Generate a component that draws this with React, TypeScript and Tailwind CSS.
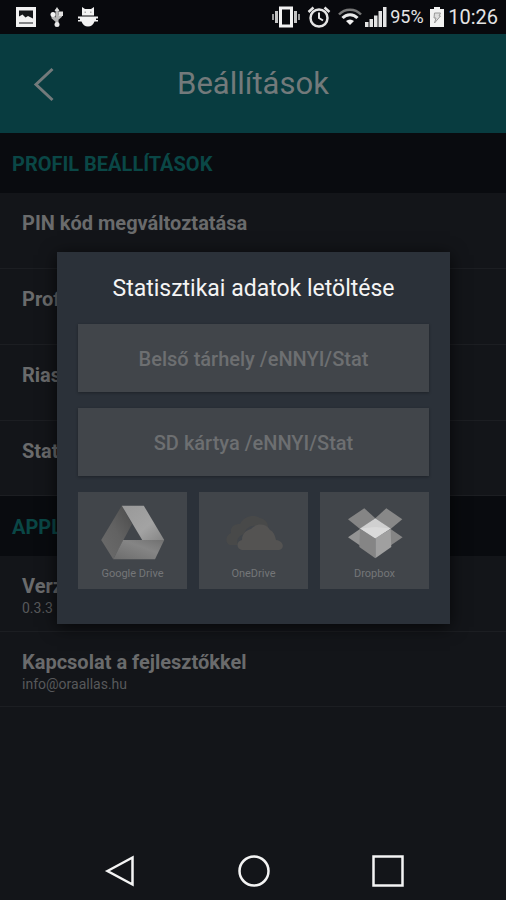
import type { ReactNode } from 'react';

interface SettingsItem {
    title: string;
    subtitle?: string;
}

const profileItems: SettingsItem[] = [
    { title: 'PIN kód megváltoztatása' },
    { title: 'Profil' },
    { title: 'Riaszt' },
    { title: 'Stat' },
];

const appItems: SettingsItem[] = [
    { title: 'Verzió', subtitle: '0.3.3' },
    { title: 'Kapcsolat a fejlesztőkkel', subtitle: 'info@oraallas.hu' },
];

function StatusBar() {
    return (
        <div className="flex h-[34px] items-center justify-between bg-[#08090d] pl-4 pr-2 text-[#e4e4e4]">
            <div className="flex items-center gap-3">
                <svg width="20" height="20" viewBox="0 0 20 20">
                    <path d="M0 0h20v20H0z" fill="#f2f2f2" />
                    <path d="M3 3.500h14v13H3z" fill="#15171a" />
                    <path d="M3 15.500V9.500l3.500-2 3 3 2.500-1.500 5 2.500v4z" fill="#f2f2f2" />
                </svg>
                <svg width="18" height="20" viewBox="0 0 18 20">
                    <path d="M9 2v15M9 14l-4-3.500V8M9 12l3.500-3V6" stroke="#b5b5b5" strokeWidth="3" fill="none" />
                    <path d="M9 0l2.500 4h-5z" fill="#d8d8d8" />
                    <circle cx="5" cy="7.500" r="2.500" fill="#f2f2f2" />
                    <path d="M10.500 4.500h4.500V9h-4.500z" fill="#e0e0e0" />
                    <circle cx="9" cy="17.500" r="2.500" fill="#e8e8e8" />
                </svg>
                <svg width="20" height="20" viewBox="0 0 20 20" fill="#f2f2f2">
                    <path d="M4 0l3 2h6l3-2v8.500H4z" />
                    <path d="M0 9.500h20v2h-2V13h2v1.500h-3.500c-1 3-3.500 5-6.500 5s-5.500-2-6.500-5H0V13h2v-1.500H0z" />
                    <path d="M6.500 4.500H8V6H6.500zM12 4.500h1.500V6H12z" fill="#aaa" />
                </svg>
            </div>
            <div className="flex items-center gap-[3px]">
                <svg width="28" height="22" viewBox="0 0 28 22">
                    <path d="M8.500 2h11v18h-11z" fill="none" stroke="#f2f2f2" strokeWidth="3" />
                    <path d="M4.500 5v12M23.500 5v12" stroke="#c4c4c4" strokeWidth="3" />
                    <path d="M1 8v6M27 8v6" stroke="#999" strokeWidth="2" />
                </svg>
                <svg className="mx-1" width="24" height="22" viewBox="0 0 24 22" fill="none" stroke="#e4e4e4">
                    <circle cx="12" cy="12" r="8.500" strokeWidth="2.500" />
                    <path d="M12 6.500V12l4 2.500" strokeWidth="2" />
                    <path d="M1.500 6l5-4.500M22.500 6l-5-4.500" strokeWidth="2.500" />
                </svg>
                <svg width="24" height="20" viewBox="0 0 24 20" fill="none">
                    <path d="M1 7.500c6-6.500 16-6.500 22 0" stroke="#777" strokeWidth="2.500" />
                    <path d="M4.500 11c4-4.500 11-4.500 15 0" stroke="#e8e8e8" strokeWidth="3" />
                    <path d="M8 14c2.500-2 5.500-2 8 0l-4 4z" fill="#f2f2f2" />
                </svg>
                <svg width="22" height="20" viewBox="0 0 22 20" fill="#e4e4e4">
                    <path d="M0 15h3.500v5H0zM4.500 12H8v8H4.500zM9 8.500h3.500V20H9zM13.500 4H17v16h-3.500zM18 0h3.500v20H18z" />
                </svg>
                <span className="w-9 text-lg leading-5">95%</span>
                <svg width="16" height="20" viewBox="0 0 16 20">
                    <path d="M5 0h6v2h4v18H1V2h4z" fill="#f2f2f2" />
                    <path d="M5.500 6h6l-1.500 3h1.500l-6 7 1.500-5H5z" fill="#ddd" stroke="#999" />
                </svg>
                <span className="text-xl leading-5">10:26</span>
            </div>
        </div>
    );
}

function Section({ title, items }: { title: string; items: SettingsItem[] }) {
    return (
        <section>
            <h2 className="flex h-[60px] items-center bg-[#090b0f] px-3 pt-px text-xl font-bold text-[#0a4746]">
                {title}
            </h2>
            <ul>
                {items.map((item) => (
                    <li key={item.title} className="h-[76px] border-b border-[#1c1e22] last:h-[75px]">
                        <button className="block h-full w-full px-[22px] pt-[18px] text-left">
                            <span className="block h-full">
                                <span className="block text-xl leading-6 font-bold text-[#6a6b6c]">{item.title}</span>
                                {item.subtitle && (
                                    <span className="block text-sm leading-5 text-[#58595b]">{item.subtitle}</span>
                                )}
                            </span>
                        </button>
                    </li>
                ))}
            </ul>
        </section>
    );
}

function DriveLogo() {
    return (
        <svg width="80" height="64" viewBox="0 0 80 64">
            <defs>
                <linearGradient id="drive-left" x1="0" y1="1" x2="1" y2="0">
                    <stop offset="0" stopColor="#6b6b6b" />
                    <stop offset="0.5" stopColor="#626262" />
                    <stop offset="1" stopColor="#4b4b4b" />
                </linearGradient>
                <linearGradient id="drive-right" x1="0" y1="0" x2="1" y2="1">
                    <stop offset="0" stopColor="#999" />
                    <stop offset="0.6" stopColor="#a3a3a3" />
                    <stop offset="1" stopColor="#858585" />
                </linearGradient>
                <linearGradient id="drive-bottom" x1="0" y1="1" x2="1" y2="0">
                    <stop offset="0" stopColor="#6c6c6c" />
                    <stop offset="0.6" stopColor="#858585" />
                    <stop offset="1" stopColor="#707070" />
                </linearGradient>
            </defs>
            <path d="M28.800 4.700L39 23 20.200 58.300 8.200 39z" fill="url(#drive-left)" />
            <path d="M28.800 4.700h22L71.200 39h-22z" fill="url(#drive-right)" />
            <path d="M30.200 39h41L62 58.300H20.200z" fill="url(#drive-bottom)" />
        </svg>
    );
}

function OneDriveLogo() {
    return (
        <svg width="80" height="64" viewBox="0 0 80 64">
            <path
                d="M24 44h-8c-5-2-5-9 1-12-1-6 3-9 9-9 4-8 14-10 20-6 5 1 9 5 8 11-3-3-6-4-9-2-6-3-13 0-15 7-6 2-8 6-6 11z"
                fill="#484949"
            />
            <path
                d="M28 49c-6-1-6-9 0-10 0-7 5-10 9-11 5-6 15-6 19 1 4 2 5 6 6 10 8 1 9 9 3 10z"
                fill="#545352"
            />
        </svg>
    );
}

function DropboxLogo() {
    return (
        <svg width="80" height="64" viewBox="0 0 80 64">
            <path d="M13 18.300L29.300 7.300l11 10L25 28z" fill="#858585" />
            <path d="M67.300 18.300L51.300 7.300l-11 10L55.600 28z" fill="#888" />
            <path d="M25 28L13 36.300l12 8.200 15.300-7.200z" fill="#949494" />
            <path d="M55.600 28l12 8.300-12 8.200-15.300-7.200z" fill="#858585" />
            <path d="M25 28l15.300 9.300v20L24.300 46z" fill="#858585" />
            <path d="M55.600 28l-15.300 9.300v20l16-11.300z" fill="#a0a0a0" />
            <path d="M25 27.500l15.300-10.200 15.300 10.200-15.300 9.800z" fill="#d0d0d0" />
            <path d="M40.300 26l15.300 1.500-15.300 9.800L25 27.500z" fill="#dadada" />
        </svg>
    );
}

function StorageButton({ children }: { children: ReactNode }) {
    return (
        <button className="h-[68px] bg-[#41454a] pt-0.5 text-xl font-medium text-[#6d6f71] shadow-[0_1px_3px_#0000004d]">
            {children}
        </button>
    );
}

function CloudButton({ label, logo }: { label: string; logo: ReactNode }) {
    return (
        <button className="flex h-[97px] flex-col items-center gap-px bg-[#41454a] pt-[9px] text-[11px] leading-4 text-[#747678]">
            {logo}
            {label}
        </button>
    );
}

export default function App() {
    return (
        <div className="relative flex min-h-screen flex-col bg-[#131519] font-[Roboto,sans-serif]">
            <StatusBar />

            <header className="grid h-[99px] grid-cols-[64px_1fr_64px] items-center bg-[#083c40] text-[#737a7b]">
                <button aria-label="Vissza" className="justify-self-end pr-2">
                    <svg width="24" height="36" viewBox="0 0 24 36" fill="none" stroke="currentColor" strokeWidth="3">
                        <path d="M20.500 3L4 18.500 20.500 34" />
                    </svg>
                </button>
                <h1 className="pt-0.5 text-center text-[31px]">Beállítások</h1>
            </header>

            <main className="flex-1">
                <Section title="PROFIL BEÁLLÍTÁSOK" items={profileItems} />
                <Section title="APPL" items={appItems} />
            </main>

            {/* Download dialog */}
            <div className="absolute inset-0 flex items-center pb-6">
                <div
                    role="dialog"
                    aria-labelledby="dialog-title"
                    className="mr-14 ml-[57px] flex-1 bg-[#2b3139] px-[21px] pt-[21px] pb-[35px] shadow-[0_3px_16px_#000000b3]"
                >
                    <h2 id="dialog-title" className="h-[51px] text-center text-[23px] leading-8 text-[#f4f4f4]">
                        Statisztikai adatok letöltése
                    </h2>
                    <div className="flex flex-col gap-4">
                        <StorageButton>Belső tárhely /eNNYI/Stat</StorageButton>
                        <StorageButton>SD kártya /eNNYI/Stat</StorageButton>
                        <div className="grid grid-cols-3 gap-3">
                            <CloudButton label="Google Drive" logo={<DriveLogo />} />
                            <CloudButton label="OneDrive" logo={<OneDriveLogo />} />
                            <CloudButton label="Dropbox" logo={<DropboxLogo />} />
                        </div>
                    </div>
                </div>
            </div>

            <nav className="relative grid h-[58px] grid-cols-3 place-items-center pr-[51px] pl-[53px]">
                <button aria-label="Vissza">
                    <svg width="32" height="32" viewBox="0 0 32 32" fill="none" stroke="#f4f4f4" strokeWidth="2.500">
                        <path d="M3.500 16L28.500 2.500v27z" />
                    </svg>
                </button>
                <button aria-label="Kezdőképernyő">
                    <svg width="32" height="32" viewBox="0 0 32 32" fill="none" stroke="#f4f4f4" strokeWidth="2.500">
                        <circle cx="16" cy="16" r="14.500" />
                    </svg>
                </button>
                <button aria-label="Áttekintés">
                    <svg width="32" height="32" viewBox="0 0 32 32" fill="none" stroke="#f4f4f4" strokeWidth="2.500">
                        <path d="M1.500 1.500h29v29h-29z" />
                    </svg>
                </button>
            </nav>
        </div>
    );
}
